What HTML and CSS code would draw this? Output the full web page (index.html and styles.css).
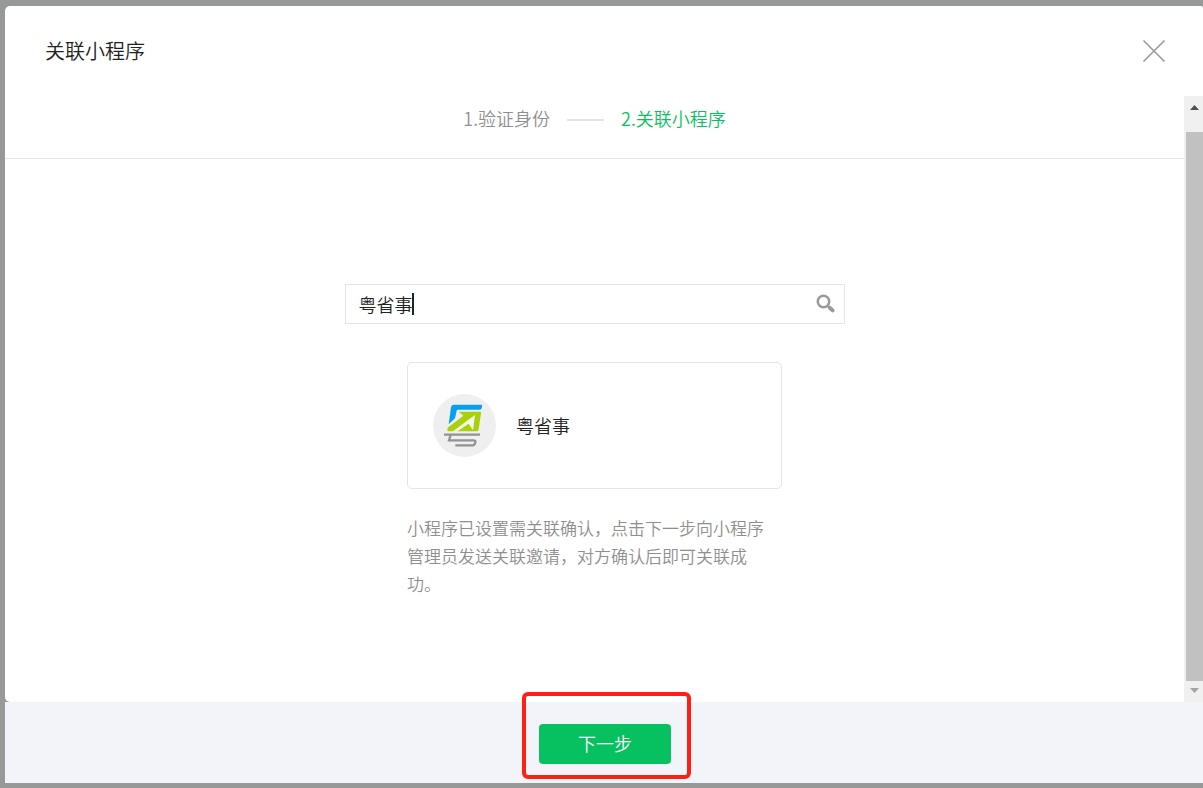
FILE: index.html
```html
<!DOCTYPE html>
<html lang="zh-CN">
<head>
<meta charset="utf-8">
<meta name="viewport" content="width=device-width, initial-scale=1">
<title>关联小程序</title>
<link rel="stylesheet" href="styles.css">
</head>
<body>
<main class="dialog">
  <div class="panel">
    <header class="dialog-header">
      <h1 class="dialog-title">关联小程序</h1>
      <button class="close" type="button" aria-label="关闭">
        <svg width="24" height="24" viewBox="0 0 24 24" fill="none" stroke="#999" stroke-width="1.6"><path d="M1.500 1.500l21 21M22.500 1.500L1.500 22.500"/></svg>
      </button>
    </header>
    <div class="dialog-body">
      <div class="content">
        <ol class="steps">
          <li>1.验证身份</li>
          <li class="step-line" aria-hidden="true"></li>
          <li class="current" aria-current="step">2.关联小程序</li>
        </ol>
        <div class="search">
          <input class="search-input" type="text" aria-label="搜索小程序" value="粤省事">
          <span class="caret"></span>
          <button class="search-button" type="button" aria-label="搜索">
            <svg width="20" height="20" viewBox="0 0 20 20" fill="none" stroke="#9a9a9a"><circle cx="7.500" cy="7.500" r="5.700" stroke-width="2.500"/><path d="M12 12l2 2" stroke-width="2.600"/><path d="M14 14l2.600 2.400" stroke-width="4" stroke-linecap="round"/></svg>
          </button>
        </div>
        <section class="result">
          <div class="card">
            <svg class="logo" viewBox="39 42 189 189" aria-hidden="true">
              <circle cx="133.500" cy="136.500" r="94.500" fill="#efefef"/>
              <path fill="#07a0ef" d="M101 74H183Q187 74 186.500 78L185 85Q184 89 180 89H114Q111 89 110 92L105 115L86 133L93 82Q94 74 101 74Z"/>
              <path fill="#a9d00b" d="M116 95H181Q184 95 183 100L176 148Q175 154 171 154H86Q82 154 82 149L83 143L130 107Z"/>
              <path fill="#f4f8e8" d="M165 105L159 151L146 131L110 155H97L139 124Z"/>
              <path fill="none" stroke="#929292" stroke-width="7" d="M72 164H180M92 165L87 181H160Q168 181 166 187L165 190Q163 196 157 196H106"/>
            </svg>
            <span class="name">粤省事</span>
          </div>
          <p class="hint">小程序已设置需关联确认，点击下一步向小程序管理员发送关联邀请，对方确认后即可关联成功。</p>
        </section>
      </div>
      <div class="scrollbar" aria-hidden="true">
        <svg class="arrow" width="9" height="5" viewBox="0 0 9 5"><path fill="#505050" d="M0 5L4.500 0L9 5Z"/></svg>
        <div class="thumb"></div>
        <svg class="arrow" width="9" height="5" viewBox="0 0 9 5"><path fill="#a3a3a3" d="M0 0H9L4.500 5Z"/></svg>
      </div>
    </div>
  </div>
  <footer class="dialog-footer">
    <div class="next-wrap">
      <button class="next" type="button">下一步</button>
      <span class="marker"></span>
    </div>
  </footer>
</main>
</body>
</html>
```
FILE: styles.css
```css
* { box-sizing: border-box; }
body {
  margin: 0;
  background: #979998;
  font-family: "Noto Sans CJK SC", sans-serif;
  font-size: 18px;
  font-weight: 350;
  line-height: 28px;
  color: #222;
}
button, input { font: inherit; color: inherit; }
button { padding: 0; border: 0; background: none; cursor: pointer; }
svg { display: block; }
.dialog {
  display: flex;
  flex-direction: column;
  min-height: 100vh;
  padding: 6px 0 5px 5px;
}
.panel {
  display: flex;
  flex: 1;
  flex-direction: column;
  background: #fff;
  border-radius: 5px;
  border-top-right-radius: 2px;
  border-bottom-right-radius: 0;
  overflow: hidden;
}
.dialog-header {
  display: flex;
  align-items: center;
  justify-content: space-between;
  height: 90px;
  padding: 0 37px 0 40px;
}
.dialog-title { margin: 0; font-size: 20px; font-weight: 350; }
.dialog-body { display: flex; flex: 1; }
.content { flex: 1; padding-bottom: 80px; }
.steps {
  display: flex;
  align-items: center;
  justify-content: center;
  gap: 17px;
  height: 63px;
  margin: 0;
  padding: 0 0 18px;
  border-bottom: 1px solid #e4e6e8;
  list-style: none;
  color: #8f8f8f;
}
.step-line { width: 37px; height: 2px; margin-top: 4px; background: #e0e5e9; }
.steps .current { color: #07c160; }
.search {
  position: relative;
  display: flex;
  align-items: center;
  max-width: 500px;
  height: 40px;
  margin: 125px auto 0;
  padding-right: 8px;
  border: 1px solid #e4e5e9;
}
.search-input {
  flex: 1;
  min-width: 0;
  padding: 0 13px;
  border: 0;
  outline: 0;
  background: none;
}
.caret {
  position: absolute;
  top: 8px;
  left: 66px;
  width: 2px;
  height: 22px;
  background: #222;
}
.result { max-width: 375px; margin: 38px auto 0; }
.card {
  display: flex;
  align-items: center;
  gap: 20px;
  height: 127px;
  padding: 0 25px;
  border: 1px solid #e4e5e7;
  border-radius: 5px;
}
.logo { width: 63px; height: 63px; }
.name { padding-bottom: 2px; }
.hint {
  margin: 25px 0 0;
  padding-right: 8px;
  font-size: 17px;
  color: #8f8f8f;
}
.scrollbar {
  display: flex;
  flex-direction: column;
  align-items: center;
  width: 19px;
  padding: 9px 0;
  background: #f0f0f0;
}
.arrow { margin-left: 2px; }
.thumb {
  flex: 1;
  align-self: stretch;
  margin: 22px 0 7px 2px;
  background: #c1c1c1;
}
.dialog-footer {
  display: flex;
  align-items: center;
  justify-content: center;
  height: 81px;
  padding: 3px 0 0 2px;
  background: #f3f4f9;
}
.next-wrap { position: relative; }
.next {
  display: block;
  width: 132px;
  height: 40px;
  padding-bottom: 2px;
  border-radius: 4px;
  background: #07c160;
  color: #fff;
}
.marker {
  position: absolute;
  inset: -32px -20px -15px -17px;
  border: 4px solid #ff2013;
  border-radius: 6px;
  pointer-events: none;
}
```
